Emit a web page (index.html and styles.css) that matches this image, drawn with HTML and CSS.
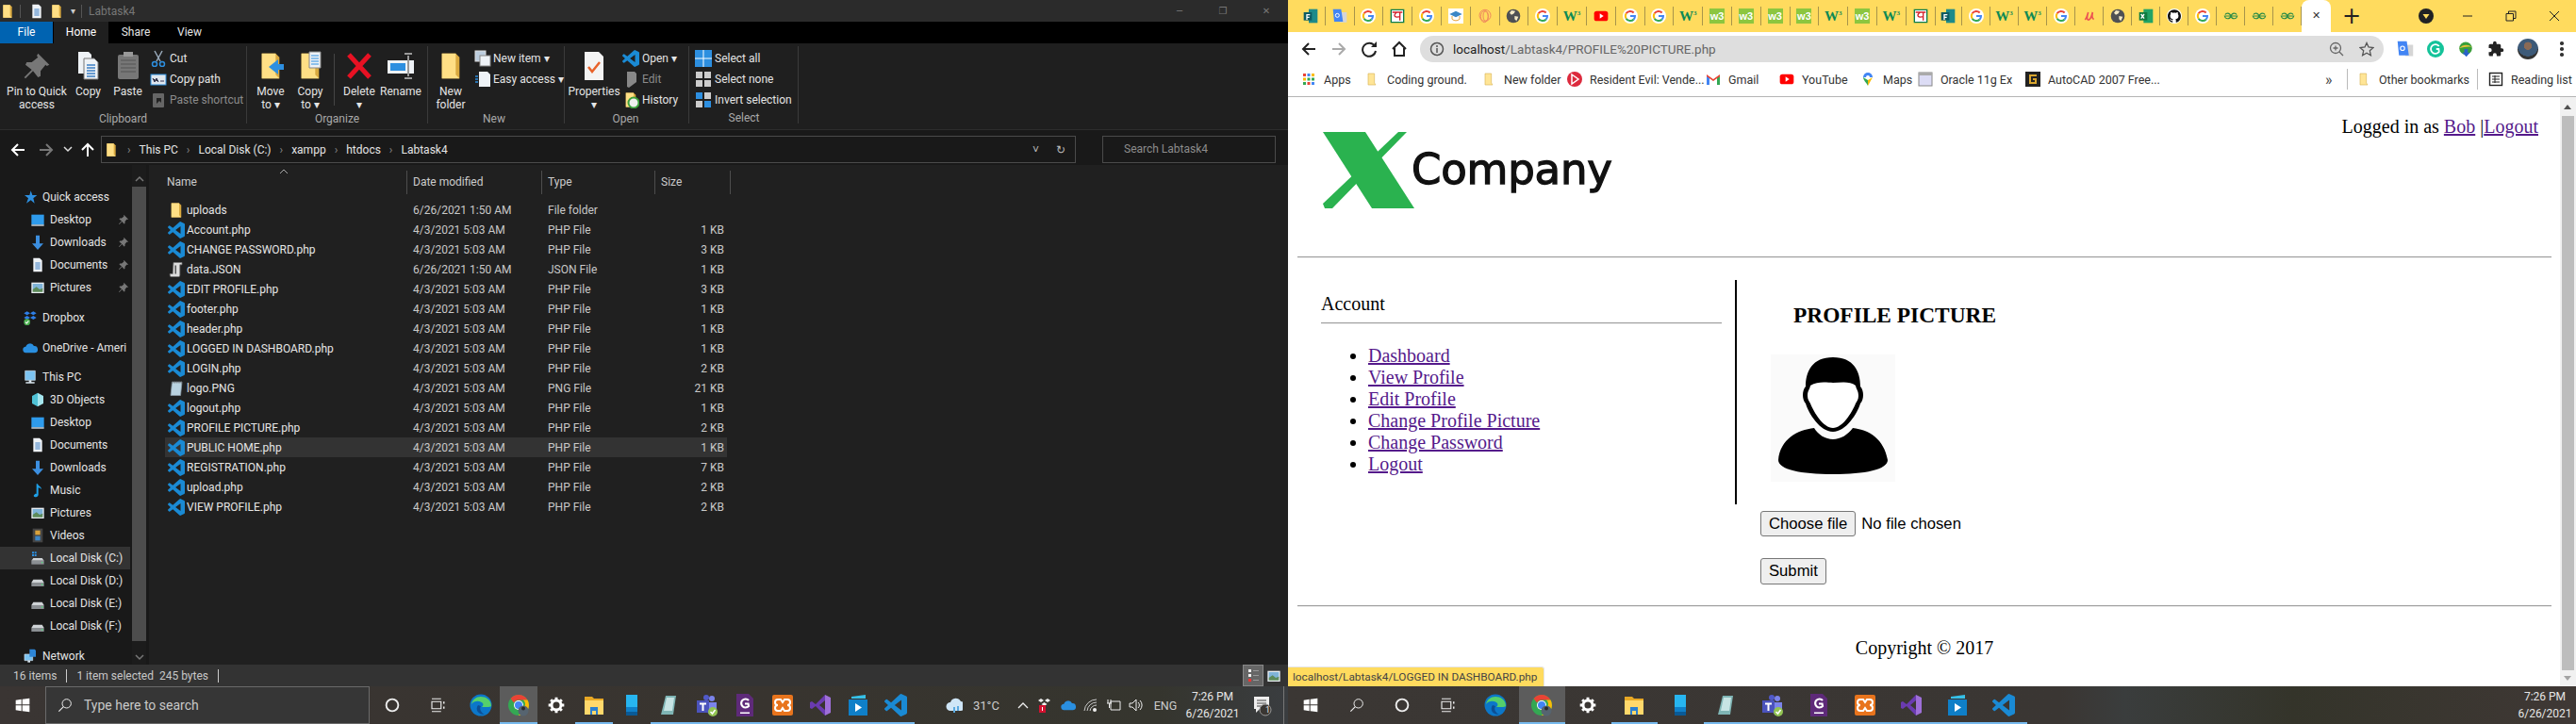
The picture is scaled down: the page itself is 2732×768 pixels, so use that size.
FILE: index.html
```html
<!DOCTYPE html>
<html lang="en">
<head>
  <meta charset="UTF-8">
  <title>Labtask4 - Profile Picture</title>
  <link rel="stylesheet" href="styles.css">
</head>
<body>
  <svg class="defs" xmlns="http://www.w3.org/2000/svg">
    <symbol id="folder" viewBox="0 0 24 24"><path fill="#d9a93f" d="M5 2h11l3 3v17H5z"/><path fill="#ffdf85" d="M5 2h11v17l3 3H5z"/></symbol>
    <symbol id="bfolder" viewBox="0 0 24 24"><path fill="#ffe596" stroke="#d9b659" d="M6 3h10v15l2 3H6z"/></symbol>
    <symbol id="vs" viewBox="0 0 24 24"><path fill="#1a8ad4" d="M23.15 2.587L18.21.21a1.494 1.494 0 0 0-1.705.29l-9.46 8.63-4.12-3.128a.999.999 0 0 0-1.276.057L.327 7.261A1 1 0 0 0 .326 8.74L3.899 12 .326 15.26a1 1 0 0 0 .001 1.479L1.65 17.94a.999.999 0 0 0 1.276.057l4.12-3.128 9.46 8.63a1.492 1.492 0 0 0 1.704.29l4.942-2.377A1.5 1.5 0 0 0 24 20.06V3.939a1.5 1.5 0 0 0-.85-1.352zm-5.146 14.861L10.826 12l7.178-5.448v10.896z"/></symbol>
    <symbol id="json" viewBox="0 0 24 24"><path fill="#ddd" stroke="#777" d="M8 2h12v3h-3v15a2 2 0 0 1-2 2H5a2 2 0 0 1-2-2v-2h4z"/><path stroke="#555" stroke-width="2" d="M11 6v12"/></symbol>
    <symbol id="note" viewBox="0 0 24 24"><path fill="#b9d2e0" stroke="#8a9aa5" d="M6 3h14l-2 19H4z"/><path stroke="#777" d="M7 2v3M10 2v3M13 2v3M16 2v3M19 2v3"/></symbol>
    <symbol id="pin" viewBox="0 0 24 24"><path fill="#777" d="M13 2l9 9-2 1-1-1-4 5 0 4-2 1-4-5-6 6-1-1 6-6-5-4 1-2h4l5-4-1-1z"/></symbol>
    <symbol id="star" viewBox="0 0 24 24"><path fill="#2d8fe0" d="M13 2l2.5 7H23l-6 5 2 8-6-5-7 5 3-8-6-5h8z"/></symbol>
    <symbol id="desk" viewBox="0 0 24 24"><path fill="#2e9bec" d="M2 4h20v16H2z"/><path fill="#dfe7ee" d="M2 20h20v2H2z"/></symbol>
    <symbol id="down" viewBox="0 0 24 24"><path fill="#3c8fe0" d="M9 1h6v13h6l-9 10-9-10h6z"/></symbol>
    <symbol id="doc" viewBox="0 0 24 24"><path fill="#eef2f6" d="M5 1h10l4 4v18H5z"/><path stroke="#3c7fc4" stroke-width="1.5" d="M8 9h8M8 12h8M8 15h8M8 18h8"/></symbol>
    <symbol id="pic" viewBox="0 0 24 24"><path fill="#e8edf2" d="M2 4h20v17H2z"/><path fill="#7fb3d8" d="M4 6h16v9H4z"/><path fill="#5c8a5a" d="M4 19v-4l6-4 5 4 5-2v6z"/></symbol>
    <symbol id="drop" viewBox="0 0 24 24"><path fill="#2e7fe8" d="M7 2l5 3-5 3-5-3zM17 2l5 3-5 3-5-3zM7 9l5 3-5 3-5-3zM17 9l5 3-5 3-5-3z"/><circle cx="7" cy="19" r="5" fill="#4caf50"/><path stroke="#fff" stroke-width="1.6" fill="none" d="M4.5 19l2 2 3-4"/></symbol>
    <symbol id="cloud" viewBox="0 0 24 24"><path fill="#2a8fe0" d="M6 20a5 5 0 0 1-1-10 7 7 0 0 1 13-1 5.500 5.500 0 0 1 1 11z"/></symbol>
    <symbol id="pc" viewBox="0 0 24 24"><path fill="#7cc4f2" stroke="#d7e3ec" d="M4 2h16v15H4z"/><path fill="#d7e3ec" d="M10 17h4v3h5v2H5v-2h5z"/></symbol>
    <symbol id="cube" viewBox="0 0 24 24"><path fill="#a5e6ee" d="M12 1l9 5v12l-9 5z"/><path fill="#4fc2d6" d="M12 1L3 6v12l9 5z"/></symbol>
    <symbol id="music" viewBox="0 0 24 24"><path fill="#1ea0e8" d="M10 2h2c1 4 6 4 6 9-1-2-3-3-5-3v11c0 3-3 4-5 4s-3-2-2-3c1-2 3-3 4-2z"/></symbol>
    <symbol id="video" viewBox="0 0 24 24"><path fill="#444" d="M4 1h16v22H4z"/><path fill="#d8a13b" d="M8 4h8v7H8z"/><path fill="#3d86c6" d="M8 13h8v7H8z"/></symbol>
    <symbol id="disk" viewBox="0 0 24 24"><path fill="#cfd3d6" d="M5 10h14l3 5H2z"/><path fill="#8b8f93" d="M2 15h20v6H2z"/><path fill="#4de07a" d="M18 17h2v2h-2z"/></symbol>
    <symbol id="sysdisk" viewBox="0 0 24 24"><path fill="#2d8fe0" d="M3 2h3v3H3zM7 2h3v3H7zM3 6h3v3H3zM7 6h3v3H7z"/><path fill="#cfd3d6" d="M5 12h14l3 4H2z"/><path fill="#8b8f93" d="M2 16h20v6H2z"/><path fill="#4de07a" d="M18 18h2v2h-2z"/></symbol>
    <symbol id="net" viewBox="0 0 24 24"><path fill="#7cc4f2" stroke="#d7e3ec" d="M3 9h13v10H3z"/><path fill="#2d86d8" d="M11 1h8l2 2v10h-10z"/><path fill="#d7e3ec" d="M8 19h4v3H8z"/></symbol>
    <symbol id="g" viewBox="0 0 24 24"><circle cx="12" cy="12" r="12" fill="#fff"/><g fill="none" stroke-width="3"><path stroke="#ea4335" d="M5.500 8A7.500 7.500 0 0 1 17.500 6.800"/><path stroke="#fbbc05" d="M5.500 8a7.500 7.500 0 0 0 0 8"/><path stroke="#34a853" d="M5.500 16a7.500 7.500 0 0 0 12 1.200"/><path stroke="#4285f4" d="M12 12h7.500a7.500 7.500 0 0 1-2 5.200"/></g></symbol>
    <symbol id="forms" viewBox="0 0 24 24"><path fill="#1d8a8a" d="M9 1h14v22H9z"/><path fill="#0d5c63" d="M1 6h13v13H1z"/><path fill="#fff" d="M5 9h6v2H7v2h3v2H7v3H5z"/></symbol>
    <symbol id="bangla" viewBox="0 0 24 24"><path fill="#fff" stroke="#0a7d4f" stroke-width="2" d="M2 2h20v20H2z"/><path fill="none" stroke="#d3202a" stroke-width="2" d="M4 6h16M16 6v13M11 6c-6 5-4 9 5 7"/></symbol>
    <symbol id="cap" viewBox="0 0 24 24"><path fill="#fff" d="M0 0h24v24H0z"/><path fill="#3b86c6" d="M12 4l10 5-10 5L2 9z"/><path fill="none" stroke="#e8a33b" stroke-width="1.500" d="M6 12v5c4 3 8 3 12 0v-5"/></symbol>
    <symbol id="swirl" viewBox="0 0 24 24"><g fill="none" stroke="#f08a5d" stroke-width="1.500"><circle cx="12" cy="11" r="9"/><ellipse cx="11" cy="13" rx="6" ry="9"/><ellipse cx="13" cy="12" rx="4" ry="8"/></g></symbol>
    <symbol id="globe" viewBox="0 0 24 24"><circle cx="12" cy="12" r="11" fill="#4e5054"/><path fill="#f3e9c6" d="M9 3l6 1-2 4-4 2-3-3zM14 12l6 1-3 7-3-3z"/></symbol>
    <symbol id="yt" viewBox="0 0 24 24"><rect x="1" y="4" width="22" height="16" rx="4" fill="#f00"/><path fill="#fff" d="M10 8l6 4-6 4z"/></symbol>
    <symbol id="gfg" viewBox="0 0 24 24"><g fill="none" stroke="#2f8d46" stroke-width="1.800"><path d="M12 12H2c1 5 8 6 10 0M12 12c-2-6-8-5-9-2"/><path d="M12 12h10c-1 5-8 6-10 0M12 12c2-6 8-5 9-2"/></g></symbol>
    <symbol id="u" viewBox="0 0 24 24"><path fill="none" stroke="#ec5252" stroke-width="2.500" d="M5 18c3-3 4-9 5-12-2 6-3 13 1 12 3-1 5-8 6-12-1 5-2 10 2 11"/></symbol>
    <symbol id="xl" viewBox="0 0 24 24"><path fill="#21a366" d="M8 1h15v22H8z"/><path fill="#107c41" d="M1 6h13v13H1z"/><path stroke="#fff" stroke-width="2" d="M4 9l5 7M9 9l-5 7"/></symbol>
    <symbol id="gh" viewBox="0 0 24 24"><circle cx="12" cy="12" r="12" fill="#fff"/><path transform="translate(1.500 1.500) scale(.875)" fill="#111" d="M12 .297c-6.630 0-12 5.373-12 12 0 5.303 3.438 9.800 8.205 11.385.600.113.820-.258.820-.577 0-.285-.010-1.040-.015-2.040-3.338.724-4.042-1.610-4.042-1.610C4.422 18.070 3.633 17.700 3.633 17.700c-1.087-.744.084-.729.084-.729 1.205.084 1.838 1.236 1.838 1.236 1.070 1.835 2.809 1.305 3.495.998.108-.776.417-1.305.760-1.605-2.665-.300-5.466-1.332-5.466-5.930 0-1.310.465-2.380 1.235-3.220-.135-.303-.540-1.523.105-3.176 0 0 1.005-.322 3.300 1.230.960-.267 1.980-.399 3-.405 1.020.006 2.040.138 3 .405 2.280-1.552 3.285-1.230 3.285-1.230.645 1.653.240 2.873.120 3.176.765.840 1.230 1.910 1.230 3.220 0 4.610-2.805 5.625-5.475 5.920.420.360.810 1.096.810 2.220 0 1.606-.015 2.896-.015 3.286 0 .315.210.690.825.570C20.565 22.092 24 17.592 24 12.297c0-6.627-5.373-12-12-12"/></symbol>
    <symbol id="translate" viewBox="0 0 24 24"><path fill="#d5d5d5" d="M10 6h13v16H12z"/><path fill="#4285f4" d="M1 1h13l3 20H3z"/><circle cx="8" cy="11" r="3" fill="none" stroke="#fff" stroke-width="1.500"/></symbol>
    <symbol id="gram" viewBox="0 0 24 24"><circle cx="12" cy="12" r="12" fill="#15c39a"/><path fill="none" stroke="#fff" stroke-width="2.400" d="M17 8a6.500 6.500 0 1 0 0 8l-.5-4H13"/></symbol>
    <symbol id="idm" viewBox="0 0 24 24"><circle cx="12" cy="11" r="9" fill="#3a9f3a"/><path fill="#e8c23a" d="M3 11c5-6 12-6 18-2-6-1-12 0-18 2z"/><path fill="#2a62c9" d="M10 12h5v5h3l-5 6-6-6h3z"/></symbol>
    <symbol id="puzzle" viewBox="0 0 24 24"><path fill="#222" d="M20.500 11H19V7a2 2 0 0 0-2-2h-4V3.500a2.500 2.500 0 0 0-5 0V5H4a2 2 0 0 0-2 2v3.800h1.500a2.700 2.700 0 0 1 0 5.400H2V20a2 2 0 0 0 2 2h3.800v-1.500a2.700 2.700 0 0 1 5.400 0V22H17a2 2 0 0 0 2-2v-4h1.500a2.500 2.500 0 0 0 0-5z"/></symbol>
    <symbol id="start" viewBox="0 0 24 24"><path fill="#fff" d="M1 4l9-1.300V11H1zM11.500 2.500L23 1v10H11.500zM1 12.500h9v8.800l-9-1.300zM11.500 12.500H23V23l-11.500-1.600z"/></symbol>
    <symbol id="lens" viewBox="0 0 24 24"><circle cx="14.500" cy="9.500" r="7" fill="none" stroke="#eee" stroke-width="1.500"/><path stroke="#eee" stroke-width="1.800" d="M9.500 14.500L2 22"/></symbol>
    <symbol id="cortana" viewBox="0 0 24 24"><circle cx="12" cy="12" r="8.500" fill="none" stroke="#eee" stroke-width="2.500"/></symbol>
    <symbol id="taskview" viewBox="0 0 24 24"><path fill="none" stroke="#eee" stroke-width="1.500" d="M4 7h13v10H4zM4 3h13M4 21h13"/><path fill="#eee" d="M20 7h2v3h-2zM20 14h2v3h-2z"/></symbol>
    <symbol id="edge" viewBox="0 0 24 24"><circle cx="12" cy="12" r="11.500" fill="#0c77c9"/><path fill="#55d06b" d="M23 13C23 6 17 3 12 3 7 3 3 6 2 11c3-4 9-4 12-1 1 2 0 3-1 4h7c2 0 3-1 3-1z"/><path fill="#0d4f94" d="M9 12c-3 4-1 10 7 10-4-2-6-6-4-9z"/></symbol>
    <symbol id="chrome" viewBox="0 0 24 24"><circle cx="12" cy="12" r="11" fill="#34a853"/><path fill="#ea4335" d="M12 1a11 11 0 0 1 9.500 5.500H12a5.500 5.500 0 0 0-5 3L3.500 5A11 11 0 0 1 12 1z"/><path fill="#fbbc05" d="M21.500 6.500A11 11 0 0 1 12 23l5-8a5.500 5.500 0 0 0 0-8.500z"/><circle cx="12" cy="12" r="5" fill="#fff"/><circle cx="12" cy="12" r="4" fill="#4285f4"/><circle cx="17" cy="18" r="5.500" fill="#566470"/><circle cx="17" cy="15.500" r="2" fill="#2b2b2b"/></symbol>
    <symbol id="gear" viewBox="0 0 24 24"><circle cx="12" cy="12" r="6" fill="none" stroke="#fff" stroke-width="3.500"/><path stroke="#fff" stroke-width="3.500" d="M12 2v4M12 18v4M2 12h4M18 12h4M5 5l2.800 2.800M16.200 16.200L19 19M5 19l2.800-2.800M16.200 7.800L19 5"/></symbol>
    <symbol id="explorer" viewBox="0 0 24 24"><path fill="#e8a825" d="M2 3h8l2 2h10v4H2z"/><path fill="#ffd86b" d="M2 7h20v15H2z"/><path fill="#2a7fd0" d="M8 14h8v8h-2v-4h-4v4H8z"/></symbol>
    <symbol id="phone" viewBox="0 0 24 24"><path fill="#27b5f0" d="M6 1h12v13H6z"/><path fill="#0f7fc8" d="M6 14h12v5H6z"/><path fill="#0a5a96" d="M6 19h12v4H6z"/></symbol>
    <symbol id="pad" viewBox="0 0 24 24"><path fill="#7fb5b5" d="M8 2h11l-3 20H3z"/><path fill="#c7e4e4" d="M9 4h8l-2 14H6z"/></symbol>
    <symbol id="teams" viewBox="0 0 24 24"><circle cx="17" cy="5" r="3" fill="#7b83eb"/><circle cx="11" cy="4" r="3" fill="#5059c9"/><path fill="#7b83eb" d="M9 9h13v8a5 5 0 0 1-10 1H9z"/><path fill="#4b53bc" d="M1 7h13v13H1z"/><path fill="#fff" d="M4 9.500h7v2H8.500V18h-2v-6.500H4z"/><circle cx="18" cy="19" r="5" fill="#92c353"/><path fill="none" stroke="#fff" stroke-width="1.500" d="M15.500 19l2 2 3-4"/></symbol>
    <symbol id="gpdf" viewBox="0 0 24 24"><path fill="#5e2a79" d="M3 0h13l5 5v19H3z"/><path fill="none" stroke="#fff" stroke-width="2.200" d="M16 7a4.500 4.500 0 1 0 0 6l-.5-2.500H12"/><path fill="#fff" d="M7 19.500h10V21H7z"/></symbol>
    <symbol id="xampp" viewBox="0 0 24 24"><rect x="1" y="1" width="22" height="22" rx="2" fill="#e8741d"/><path fill="none" stroke="#fff" stroke-width="2" d="M7 6h3l2 3 2-3h3a2 2 0 0 1 0 6 2 2 0 0 1 0 6h-3l-2-3-2 3H7a2 2 0 0 1 0-6 2 2 0 0 1 0-6z"/></symbol>
    <symbol id="vstudio" viewBox="0 0 24 24"><path fill="#9e6fd8" d="M17 1l6 3v16l-6 3z"/><path fill="#6a3bb0" d="M17 1L7 11 3 8 1 9v6l2 1 4-3 10 10v-6l-6-5 6-5z"/></symbol>
    <symbol id="player" viewBox="0 0 24 24"><path fill="#35c0e8" d="M5 3l15-2v4H5z"/><path fill="#0f7fc8" d="M2 6h20v17H2z"/><path fill="#fff" d="M9 10l7 4.500L9 19z"/></symbol>
  </svg>

  <div class="windows">
    <section class="explorer">
      <div class="ex-title">
        <svg class="i16"><use href="#folder"/></svg><i class="ex-sep"></i>
        <svg class="i16"><use href="#doc"/></svg>
        <svg class="i16 ex-f2"><use href="#folder"/></svg>
        <span class="ex-drop">▾</span><i class="ex-sep sep2"></i>
        <span class="ex-name">Labtask4</span>
        <span class="ex-controls"><b>─</b><b>❐</b><b>✕</b></span>
      </div>
      <div class="ex-tabs">
        <span class="ex-tab file">File</span>
        <span class="ex-tab home">Home</span>
        <span class="ex-tab share">Share</span>
        <span class="ex-tab view">View</span>
      </div>
      <div class="ribbon">
        <div class="group g-clip">
          <div class="group-items">
            <div class="big w70 dim-ic"><svg class="i32"><use href="#pin"/></svg><span>Pin to Quick<br>access</span></div>
            <div class="big w39"><svg class="i32"><path fill="#eef2f6" d="M5 1h11l3 3v20H5z"/><path fill="#eef2f6" stroke="#777" d="M11 8h11l4 4v18H11z"/><path stroke="#3c7fc4" stroke-width="1.500" d="M14 15h9M14 18h9M14 21h9M14 24h9M14 27h9"/></svg><span>Copy</span></div>
            <div class="big w45"><svg class="i32"><rect x="5" y="4" width="22" height="26" rx="2" fill="#777"/><path stroke="#555" d="M8 10h16M8 14h16M8 18h16M8 22h16"/><rect x="11" y="1" width="10" height="5" fill="#999"/></svg><span>Paste</span></div>
            <div class="small-col">
              <div class="small"><svg class="i18"><path fill="none" stroke="#9ab" stroke-width="1.500" d="M5 1l6 11M13 1L7 12"/><circle cx="5" cy="15" r="2.500" fill="none" stroke="#2d8fe0" stroke-width="1.500"/><circle cx="13" cy="15" r="2.500" fill="none" stroke="#2d8fe0" stroke-width="1.500"/></svg><span>Cut</span></div>
              <div class="small"><svg class="i18"><rect x="1" y="4" width="16" height="11" fill="#dfe7ee" stroke="#2d8fe0"/><path stroke="#335" d="M3 8l2 4 2-4 2 4M11 11h4"/></svg><span>Copy path</span></div>
              <div class="small muted"><svg class="i18"><rect x="3" y="2" width="12" height="15" rx="1" fill="#666"/><path fill="#222" d="M7 7h5v5l-2-2-3 3z"/></svg><span>Paste shortcut</span></div>
            </div>
          </div>
          <div class="group-label">Clipboard</div>
        </div>
        <div class="group g-org">
          <div class="group-items">
            <div class="big w42"><svg class="i32"><use href="#folder"/><path fill="#2d8fe0" d="M14 17l10-8v5h6v6h-6v5z"/></svg><span>Move<br>to ▾</span></div>
            <div class="big w42"><svg class="i32"><use href="#folder"/><path fill="#eef2f6" stroke="#888" d="M15 1h12v17H15z"/><path stroke="#2d8fe0" d="M17 5h8M17 8h8M17 11h8M17 14h8"/></svg><span>Copy<br>to ▾</span></div>
            <i class="rib-sep"></i>
            <div class="big w44"><svg class="i32"><path stroke="#e81123" stroke-width="5" d="M5 4l22 24M27 4L5 28"/></svg><span>Delete<br>▾</span></div>
            <div class="big w44"><svg class="i32"><rect x="2" y="10" width="28" height="14" fill="#eef2f6"/><rect x="5" y="13" width="16" height="8" fill="#2d8fe0"/><path stroke="#999" stroke-width="2" d="M24 5v22M20 3h8M20 29h8"/></svg><span>Rename</span></div>
          </div>
          <div class="group-label">Organize</div>
        </div>
        <div class="group g-new">
          <div class="group-items">
            <div class="big w48"><svg class="i32"><use href="#folder"/></svg><span>New<br>folder</span></div>
            <div class="small-col">
              <div class="small tight"><svg class="i18"><rect x="1" y="1" width="11" height="11" fill="#bcd" stroke="#ddd"/><rect x="6" y="6" width="11" height="11" fill="#eef2f6" stroke="#888"/></svg><span>New item ▾</span></div>
              <div class="small tight"><svg class="i18"><path fill="#eef2f6" d="M5 1h9l3 3v13H5z"/><path stroke="#2d8fe0" stroke-width="1.500" d="M1 6h3M1 9h3M1 12h3"/></svg><span>Easy access ▾</span></div>
            </div>
          </div>
          <div class="group-label">New</div>
        </div>
        <div class="group g-open">
          <div class="group-items">
            <div class="big w58"><svg class="i32"><path fill="#f3f3f3" d="M6 1h15l5 5v25H6z"/><path fill="none" stroke="#e8622a" stroke-width="2.500" d="M10 17l4 5 8-10"/></svg><span>Properties<br>▾</span></div>
            <div class="small-col">
              <div class="small"><svg class="i18"><use href="#vs"/></svg><span>Open ▾</span></div>
              <div class="small muted"><svg class="i18"><path fill="#888" d="M5 1h8l2 2v9L7 18l-2-1z"/></svg><span>Edit</span></div>
              <div class="small"><svg class="i18"><use href="#folder"/><circle cx="12" cy="12" r="5.500" fill="#eee" stroke="#3a9f3a" stroke-width="2"/></svg><span>History</span></div>
            </div>
          </div>
          <div class="group-label">Open</div>
        </div>
        <div class="group g-sel">
          <div class="group-items">
            <div class="small-col">
              <div class="small"><svg class="i18"><path fill="#2d8fe0" d="M0 0h18v18H0z"/><path stroke="#fff" d="M9 0v18M0 9h18"/></svg><span>Select all</span></div>
              <div class="small"><svg class="i18"><path fill="#ccc" d="M1 1h7v7H1zM10 1h7v7h-7zM1 10h7v7H1zM10 10h7v7h-7z"/></svg><span>Select none</span></div>
              <div class="small"><svg class="i18"><path fill="#2d8fe0" d="M1 1h7v7H1zM10 10h7v7h-7z"/><path fill="#ccc" d="M10 1h7v7h-7zM1 10h7v7H1z"/></svg><span>Invert selection</span></div>
            </div>
          </div>
          <div class="group-label">Select</div>
        </div>
      </div>
      <div class="ex-address">
        <div class="ex-nav-btns">
          <svg class="i16"><path fill="none" stroke="#fff" stroke-width="2" d="M15 8H2M8 2L2 8l6 6"/></svg>
          <svg class="i16"><path fill="none" stroke="#777" stroke-width="2" d="M1 8h13M8 2l6 6-6 6"/></svg>
          <svg class="nav-chev"><path fill="none" stroke="#ddd" stroke-width="1.500" d="M1 1l4 4 4-4"/></svg>
          <svg class="i16"><path fill="none" stroke="#fff" stroke-width="2" d="M8 15V2M2 8l6-6 6 6"/></svg>
        </div>
        <div class="addr-box">
          <svg class="i16"><use href="#folder"/></svg>
          <span class="crumb-sep">›</span><span>This PC</span>
          <span class="crumb-sep">›</span><span>Local Disk (C:)</span>
          <span class="crumb-sep">›</span><span>xampp</span>
          <span class="crumb-sep">›</span><span>htdocs</span>
          <span class="crumb-sep">›</span><span>Labtask4</span>
          <span class="addr-end"><span>˅</span><span>↻</span></span>
        </div>
        <div class="search-box"><span>Search Labtask4</span></div>
      </div>
      <div class="ex-body">
        <div class="nav-pane">
          <div class="nav-list">
            <div class="nav-item root"><svg class="i16"><use href="#star"/></svg><span>Quick access</span></div>
            <div class="nav-item"><svg class="i16"><use href="#desk"/></svg><span>Desktop</span><svg class="i12 pinned"><use href="#pin"/></svg></div>
            <div class="nav-item"><svg class="i16"><use href="#down"/></svg><span>Downloads</span><svg class="i12 pinned"><use href="#pin"/></svg></div>
            <div class="nav-item"><svg class="i16"><use href="#doc"/></svg><span>Documents</span><svg class="i12 pinned"><use href="#pin"/></svg></div>
            <div class="nav-item"><svg class="i16"><use href="#pic"/></svg><span>Pictures</span><svg class="i12 pinned"><use href="#pin"/></svg></div>
            <div class="nav-item root gap"><svg class="i16"><use href="#drop"/></svg><span>Dropbox</span></div>
            <div class="nav-item root gap"><svg class="i16"><use href="#cloud"/></svg><span>OneDrive - Ameri</span></div>
            <div class="nav-item root gap7"><svg class="i16"><use href="#pc"/></svg><span>This PC</span></div>
            <div class="nav-item"><svg class="i16"><use href="#cube"/></svg><span>3D Objects</span></div>
            <div class="nav-item"><svg class="i16"><use href="#desk"/></svg><span>Desktop</span></div>
            <div class="nav-item"><svg class="i16"><use href="#doc"/></svg><span>Documents</span></div>
            <div class="nav-item"><svg class="i16"><use href="#down"/></svg><span>Downloads</span></div>
            <div class="nav-item"><svg class="i16"><use href="#music"/></svg><span>Music</span></div>
            <div class="nav-item"><svg class="i16"><use href="#pic"/></svg><span>Pictures</span></div>
            <div class="nav-item"><svg class="i16"><use href="#video"/></svg><span>Videos</span></div>
            <div class="nav-item selected"><svg class="i16"><use href="#sysdisk"/></svg><span>Local Disk (C:)</span></div>
            <div class="nav-item"><svg class="i16"><use href="#disk"/></svg><span>Local Disk (D:)</span></div>
            <div class="nav-item"><svg class="i16"><use href="#disk"/></svg><span>Local Disk (E:)</span></div>
            <div class="nav-item"><svg class="i16"><use href="#disk"/></svg><span>Local Disk (F:)</span></div>
            <div class="nav-item root gap"><svg class="i16"><use href="#net"/></svg><span>Network</span></div>
          </div>
          <div class="nav-scroll"><svg class="nav-arrow"><path fill="none" stroke="#777" stroke-width="1.500" d="M2 6l4-4 4 4"/></svg><i class="nav-thumb"></i><svg class="nav-arrow"><path fill="none" stroke="#777" stroke-width="1.500" d="M2 2l4 4 4-4"/></svg></div>
        </div>
        <div class="file-pane">
          <div class="file-head">
            <svg class="sort-caret"><path fill="none" stroke="#aaa" d="M1 5l4-4 4 4"/></svg>
            <span>Name</span><span>Date modified</span><span>Type</span><span>Size</span>
          </div>
          <div class="file-row"><span class="fname"><svg class="i18"><use href="#folder"/></svg>uploads</span><span>6/26/2021 1:50 AM</span><span>File folder</span><span></span></div>
          <div class="file-row"><span class="fname"><svg class="i18"><use href="#vs"/></svg>Account.php</span><span>4/3/2021 5:03 AM</span><span>PHP File</span><span class="fsize">1 KB</span></div>
          <div class="file-row"><span class="fname"><svg class="i18"><use href="#vs"/></svg>CHANGE PASSWORD.php</span><span>4/3/2021 5:03 AM</span><span>PHP File</span><span class="fsize">3 KB</span></div>
          <div class="file-row"><span class="fname"><svg class="i18"><use href="#json"/></svg>data.JSON</span><span>6/26/2021 1:50 AM</span><span>JSON File</span><span class="fsize">1 KB</span></div>
          <div class="file-row"><span class="fname"><svg class="i18"><use href="#vs"/></svg>EDIT PROFILE.php</span><span>4/3/2021 5:03 AM</span><span>PHP File</span><span class="fsize">3 KB</span></div>
          <div class="file-row"><span class="fname"><svg class="i18"><use href="#vs"/></svg>footer.php</span><span>4/3/2021 5:03 AM</span><span>PHP File</span><span class="fsize">1 KB</span></div>
          <div class="file-row"><span class="fname"><svg class="i18"><use href="#vs"/></svg>header.php</span><span>4/3/2021 5:03 AM</span><span>PHP File</span><span class="fsize">1 KB</span></div>
          <div class="file-row"><span class="fname"><svg class="i18"><use href="#vs"/></svg>LOGGED IN DASHBOARD.php</span><span>4/3/2021 5:03 AM</span><span>PHP File</span><span class="fsize">1 KB</span></div>
          <div class="file-row"><span class="fname"><svg class="i18"><use href="#vs"/></svg>LOGIN.php</span><span>4/3/2021 5:03 AM</span><span>PHP File</span><span class="fsize">2 KB</span></div>
          <div class="file-row"><span class="fname"><svg class="i18"><use href="#note"/></svg>logo.PNG</span><span>4/3/2021 5:03 AM</span><span>PNG File</span><span class="fsize">21 KB</span></div>
          <div class="file-row"><span class="fname"><svg class="i18"><use href="#vs"/></svg>logout.php</span><span>4/3/2021 5:03 AM</span><span>PHP File</span><span class="fsize">1 KB</span></div>
          <div class="file-row"><span class="fname"><svg class="i18"><use href="#vs"/></svg>PROFILE PICTURE.php</span><span>4/3/2021 5:03 AM</span><span>PHP File</span><span class="fsize">2 KB</span></div>
          <div class="file-row active"><span class="fname"><svg class="i18"><use href="#vs"/></svg>PUBLIC HOME.php</span><span>4/3/2021 5:03 AM</span><span>PHP File</span><span class="fsize">1 KB</span></div>
          <div class="file-row"><span class="fname"><svg class="i18"><use href="#vs"/></svg>REGISTRATION.php</span><span>4/3/2021 5:03 AM</span><span>PHP File</span><span class="fsize">7 KB</span></div>
          <div class="file-row"><span class="fname"><svg class="i18"><use href="#vs"/></svg>upload.php</span><span>4/3/2021 5:03 AM</span><span>PHP File</span><span class="fsize">2 KB</span></div>
          <div class="file-row"><span class="fname"><svg class="i18"><use href="#vs"/></svg>VIEW PROFILE.php</span><span>4/3/2021 5:03 AM</span><span>PHP File</span><span class="fsize">2 KB</span></div>
        </div>
      </div>
      <div class="ex-status">
        <span class="st-item">16 items</span>
        <span class="st-item">1 item selected&nbsp; 245 bytes</span>
        <span class="st-views">
          <span class="st-view on"><svg class="i16"><path fill="#eee" d="M3 1h3v3H3zM3 6h3v3H3z"/><path fill="#e33" d="M3 11h3v3H3z"/><path stroke="#999" d="M8 2.500h6M8 7.500h6M8 12.500h6"/></svg></span>
          <span class="st-view"><svg class="i16"><use href="#pic"/></svg></span>
        </span>
      </div>
    </section>

    <section class="chrome">
      <div class="tabstrip">
        <div class="favs">
          <span class="fav"><svg class="i16"><use href="#forms"/></svg></span>
          <span class="fav"><svg class="i16"><use href="#translate"/></svg></span>
          <span class="fav"><svg class="i16"><use href="#g"/></svg></span>
          <span class="fav"><svg class="i16"><use href="#bangla"/></svg></span>
          <span class="fav"><svg class="i16"><use href="#g"/></svg></span>
          <span class="fav"><svg class="i16"><use href="#cap"/></svg></span>
          <span class="fav"><svg class="i16"><use href="#swirl"/></svg></span>
          <span class="fav"><svg class="i16"><use href="#globe"/></svg></span>
          <span class="fav"><svg class="i16"><use href="#g"/></svg></span>
          <span class="fav"><b class="w3">W<sup>3</sup></b></span>
          <span class="fav"><svg class="i16"><use href="#yt"/></svg></span>
          <span class="fav"><svg class="i16"><use href="#g"/></svg></span>
          <span class="fav"><svg class="i16"><use href="#g"/></svg></span>
          <span class="fav"><b class="w3">W<sup>3</sup></b></span>
          <span class="fav"><b class="w3box">w3</b></span>
          <span class="fav"><b class="w3box">w3</b></span>
          <span class="fav"><b class="w3box">w3</b></span>
          <span class="fav"><b class="w3box">w3</b></span>
          <span class="fav"><b class="w3">W<sup>3</sup></b></span>
          <span class="fav"><b class="w3box">w3</b></span>
          <span class="fav"><b class="w3">W<sup>3</sup></b></span>
          <span class="fav"><svg class="i16"><use href="#bangla"/></svg></span>
        </div>
        <div class="favs second">
          <span class="fav"><svg class="i16"><use href="#forms"/></svg></span>
          <span class="fav"><svg class="i16"><use href="#g"/></svg></span>
          <span class="fav"><b class="w3">W<sup>3</sup></b></span>
          <span class="fav"><b class="w3">W<sup>3</sup></b></span>
          <span class="fav"><svg class="i16"><use href="#g"/></svg></span>
          <span class="fav"><svg class="i16"><use href="#u"/></svg></span>
          <span class="fav"><svg class="i16"><use href="#globe"/></svg></span>
          <span class="fav"><svg class="i16"><use href="#xl"/></svg></span>
          <span class="fav"><svg class="i16"><use href="#gh"/></svg></span>
          <span class="fav"><svg class="i16"><use href="#g"/></svg></span>
          <span class="fav"><svg class="i16"><use href="#gfg"/></svg></span>
          <span class="fav"><svg class="i16"><use href="#gfg"/></svg></span>
          <span class="fav"><svg class="i16"><use href="#gfg"/></svg></span>
        </div>
        <span class="tab-active">✕</span>
        <span class="tab-new">+</span>
        <span class="tab-search"><svg class="i16"><circle cx="8" cy="8" r="8" fill="#202124"/><path fill="#ffdb5e" d="M4.500 6h7L8 11z"/></svg></span>
        <span class="win-btns">
          <span><svg class="i12"><path stroke="#222" d="M1 6h10"/></svg></span>
          <span><svg class="i12"><path fill="none" stroke="#222" d="M1 3.500h7.500V11H1zM3.500 3.500V1H11v7.500H8.500"/></svg></span>
          <span><svg class="i12"><path stroke="#222" d="M1 1l10 10M11 1L1 11"/></svg></span>
        </span>
      </div>
      <div class="toolbar">
        <div class="tool-btns">
          <svg class="i18"><path fill="none" stroke="#222" stroke-width="2" d="M16 9H3M9 3L3 9l6 6"/></svg>
          <svg class="i18"><path fill="none" stroke="#aaa" stroke-width="2" d="M2 9h13M9 3l6 6-6 6"/></svg>
          <svg class="i18"><path fill="none" stroke="#222" stroke-width="2" d="M15 6a7 7 0 1 0 1 5"/><path fill="#222" d="M11 7h6V1z"/></svg>
          <svg class="i18"><path fill="none" stroke="#222" stroke-width="2" d="M2 9l7-7 7 7M4 8v8h10V8"/></svg>
        </div>
        <div class="omnibox">
          <svg class="i16"><circle cx="8" cy="8" r="6.500" fill="none" stroke="#555" stroke-width="1.500"/><path stroke="#555" stroke-width="1.500" d="M8 7v5M8 4v2"/></svg>
          <span class="url"><b>localhost</b>/Labtask4/PROFILE%20PICTURE.php</span>
          <svg class="i16 omni-zoom"><circle cx="7" cy="7" r="5.500" fill="none" stroke="#666" stroke-width="1.300"/><path stroke="#666" stroke-width="1.300" d="M11 11l4 4M7 4.500v5M4.500 7h5"/></svg>
          <svg class="i16 omni-star"><path fill="none" stroke="#555" stroke-width="1.300" d="M8 1.500l2 4.500 5 .5-3.700 3.300 1.100 4.900L8 12.300l-4.400 2.400 1.100-4.900L1 6.500l5-.5z"/></svg>
        </div>
        <div class="ext-btns">
          <svg class="i18"><use href="#translate"/></svg>
          <svg class="i18"><use href="#gram"/></svg>
          <svg class="i18"><use href="#idm"/></svg>
          <svg class="i18"><use href="#puzzle"/></svg>
          <span class="avatar"></span>
          <span class="kebab"><i></i><i></i><i></i></span>
        </div>
      </div>
      <div class="bookmarks">
        <span class="bm bm-apps"><svg class="i12"><path fill="#ea4335" d="M0 0h3v3H0z"/><path fill="#4285f4" d="M4.500 0h3v3h-3zM9 9h3v3H9z"/><path fill="#fbbc05" d="M9 0h3v3H9zM0 4.500h3v3H0z"/><path fill="#34a853" d="M4.500 4.500h3v3h-3zM9 4.500h3v3H9zM0 9h3v3H0z"/><path fill="#ea4335" d="M4.500 9h3v3h-3z"/></svg>Apps</span>
        <span class="bm bm-coding"><svg class="i16"><use href="#bfolder"/></svg>Coding ground.</span>
        <span class="bm bm-newf"><svg class="i16"><use href="#bfolder"/></svg>New folder</span>
        <span class="bm bm-re"><svg class="i16"><circle cx="8" cy="8" r="8" fill="#dc2a3d"/><path fill="none" stroke="#fff" stroke-width="1.500" d="M5 3l7 5-7 5z"/></svg>Resident Evil: Vende...</span>
        <span class="bm bm-gmail"><svg class="i16"><path fill="#4285f4" d="M1 4l3 2v8H1z"/><path fill="#34a853" d="M12 6l3-2v10h-3z"/><path fill="#ea4335" d="M1 3l7 5 7-5v2L8 10 1 5z"/></svg>Gmail</span>
        <span class="bm bm-yt"><svg class="i16"><use href="#yt"/></svg>YouTube</span>
        <span class="bm bm-maps"><svg class="i16"><path fill="#34a853" d="M8 15C6 11 3 9 3 6l5 3z"/><path fill="#fbbc05" d="M8 15l5-9-5 3z"/><path fill="#4285f4" d="M3 6a5 5 0 0 1 10 0z"/><circle cx="8" cy="6" r="2" fill="#fff"/></svg>Maps</span>
        <span class="bm bm-ora"><svg class="i16"><rect x="1" y="1" width="14" height="14" fill="#dcdcf5" stroke="#888"/><path fill="#aaa" d="M1 1h14v3H1z"/></svg>Oracle 11g Ex</span>
        <span class="bm bm-acad"><svg class="i16"><rect width="16" height="16" fill="#222"/><path fill="none" stroke="#d9a62e" stroke-width="2" d="M12 4H5v8h6V8H8"/></svg>AutoCAD 2007 Free...</span>
        <span class="bm-more">»</span><i class="bm-sep"></i>
        <span class="bm bm-other"><svg class="i16"><use href="#bfolder"/></svg>Other bookmarks</span><i class="bm-sep"></i>
        <span class="bm bm-read"><svg class="i16"><rect x="1.500" y="1.500" width="13" height="13" fill="none" stroke="#222" stroke-width="1.400"/><path stroke="#222" d="M4 5h8M4 8h8M4 11h8M7 4v8"/></svg>Reading list</span>
      </div>
      <div class="page">
        <div class="content">
          <header class="site-head">
            <div class="logo">
              <svg class="logo-x" viewBox="0 0 100 85"><path fill="#2ab24f" d="M0 2h45l52 81H52z"/><path fill="#2ab24f" d="M80 2h9L10 83H2L0 78z"/></svg>
              <span class="logo-text">Company</span>
            </div>
            <div class="logged">Logged in as <a href="#">Bob</a> |<a href="#">Logout</a></div>
          </header>
          <hr class="rule">
          <div class="main">
            <aside class="side">
              <div class="side-title">Account</div>
              <hr class="rule">
              <ul class="side-menu">
                <li><a href="#">Dashboard</a></li>
                <li><a href="#">View Profile</a></li>
                <li><a href="#">Edit Profile</a></li>
                <li><a href="#">Change Profile Picture</a></li>
                <li><a href="#">Change Password</a></li>
                <li><a href="#">Logout</a></li>
              </ul>
            </aside>
            <div class="profile">
              <h3>PROFILE PICTURE</h3>
              <svg class="avatar-pic" viewBox="0 0 132 135">
                <rect width="132" height="135" fill="#fafafa"/>
                <g class="sil">
                  <path d="M66 3C44 3 37 18 37 34c-4 4-4 14 0 18 3 10 15 30 29 30s26-20 29-30c4-4 4-14 0-18C95 18 88 3 66 3z"/>
                  <path fill="#fff" d="M42 33c8-5 18-3 24-3 8 0 18-2 24 3 1 5 3 5 3 11 0 4-2 6-3 8-4 10-14 26-24 26S46 62 42 52c-1-2-3-4-3-8 0-6 2-6 3-11z"/>
                  <path d="M46 78c4 7 12 12 20 12s16-5 21-12c18 2 33 12 37 34 0 10-24 15-58 15S8 122 8 112c2-22 20-32 38-34z"/>
                </g>
              </svg>
            </div>
          </div>
          <form class="upload">
            <div class="file-line"><button type="button">Choose file</button><span>No file chosen</span></div>
            <button type="button" class="submit">Submit</button>
          </form>
          <hr class="rule">
          <footer class="copyright">Copyright © 2017</footer>
        </div>
        <div class="page-scroll"><span class="ps-up"></span><i class="ps-thumb"></i><span class="ps-dn"></span></div>
        <div class="status-bubble">localhost/Labtask4/LOGGED IN DASHBOARD.php</div>
      </div>
    </section>
  </div>

  <div class="taskbars">
    <div class="taskbar tb-left">
      <span class="tb-btn"><svg class="i16"><use href="#start"/></svg></span>
      <div class="tb-search"><svg class="i16"><use href="#lens"/></svg><span>Type here to search</span></div>
      <span class="tb-btn"><svg class="i18"><use href="#cortana"/></svg></span>
      <span class="tb-btn"><svg class="i18"><use href="#taskview"/></svg></span>
      <span class="tb-app"><svg class="i24"><use href="#edge"/></svg></span>
      <span class="tb-app run cur"><svg class="i24"><use href="#chrome"/></svg></span>
      <span class="tb-app"><svg class="i20"><use href="#gear"/></svg></span>
      <span class="tb-app run"><svg class="i24"><use href="#explorer"/></svg></span>
      <span class="tb-app"><svg class="i24"><use href="#phone"/></svg></span>
      <span class="tb-app run"><svg class="i24"><use href="#pad"/></svg></span>
      <span class="tb-app run"><svg class="i24"><use href="#teams"/></svg></span>
      <span class="tb-app run"><svg class="i24"><use href="#gpdf"/></svg></span>
      <span class="tb-app run"><svg class="i24"><use href="#xampp"/></svg></span>
      <span class="tb-app run"><svg class="i24"><use href="#vstudio"/></svg></span>
      <span class="tb-app run"><svg class="i24"><use href="#player"/></svg></span>
      <span class="tb-app run"><svg class="i24"><use href="#vs"/></svg></span>
      <div class="tray">
        <span class="tr-weather"><svg class="i18"><path fill="#cfe6f7" d="M5 15a4.500 4.500 0 0 1 0-9 6 6 0 0 1 11-1 5 5 0 0 1 0 10z"/><path fill="#5aa9e0" d="M8 11h2v6H8zM12 10h2v5h-2z"/></svg></span>
        <span class="tr-temp">31°C</span>
        <span class="tr-ic"><svg class="i12"><path fill="none" stroke="#eee" stroke-width="1.300" d="M1 9l5-5 5 5"/></svg></span>
        <span class="tr-ic"><svg class="i16"><path fill="#eee" d="M3 1l3 2-3 2-3-2zM10 1l3 2-3 2-3-2zM6.500 5l3 2-3 2-3-2z"/><rect x="1" y="8" width="7" height="8" fill="#d3102f"/><path stroke="#fff" d="M4.500 10v4"/></svg></span>
        <span class="tr-ic"><svg class="i16"><use href="#cloud"/></svg></span>
        <span class="tr-ic"><svg class="i16"><path fill="none" stroke="#ccc" d="M1 14a13 13 0 0 1 13-12M4 14a10 10 0 0 1 10-9M7 14a7 7 0 0 1 7-6"/><circle cx="12" cy="13" r="2" fill="#eee"/></svg></span>
        <span class="tr-ic"><svg class="i16"><path fill="none" stroke="#eee" d="M5 4h10v9H5z"/><path stroke="#eee" d="M2 2v4M5 2v4M1 6h5M3.500 6v5"/></svg></span>
        <span class="tr-ic"><svg class="i16"><path fill="none" stroke="#eee" d="M1 6h3l4-4v12l-4-4H1zM10 5a4 4 0 0 1 0 6M12 3a7 7 0 0 1 0 10"/></svg></span>
        <span class="tr-lang">ENG</span>
        <span class="tr-clock">7:26 PM<br>6/26/2021</span>
        <span class="tr-notif"><svg class="i24"><path fill="#eee" d="M3 3h16v13H9l-4 4v-4H3z"/><path stroke="#444" d="M6 7h10M6 10h10M6 13h6"/><circle cx="15" cy="17" r="6" fill="#3a3632" stroke="#999"/></svg><b>1</b></span>
      </div>
    </div>
    <div class="taskbar tb-right">
      <span class="tb-btn"><svg class="i16"><use href="#start"/></svg></span>
      <span class="tb-btn"><svg class="i16"><use href="#lens"/></svg></span>
      <span class="tb-btn"><svg class="i18"><use href="#cortana"/></svg></span>
      <span class="tb-btn"><svg class="i18"><use href="#taskview"/></svg></span>
      <span class="tb-app"><svg class="i24"><use href="#edge"/></svg></span>
      <span class="tb-app run cur"><svg class="i24"><use href="#chrome"/></svg></span>
      <span class="tb-app"><svg class="i20"><use href="#gear"/></svg></span>
      <span class="tb-app run"><svg class="i24"><use href="#explorer"/></svg></span>
      <span class="tb-app"><svg class="i24"><use href="#phone"/></svg></span>
      <span class="tb-app run"><svg class="i24"><use href="#pad"/></svg></span>
      <span class="tb-app run"><svg class="i24"><use href="#teams"/></svg></span>
      <span class="tb-app run"><svg class="i24"><use href="#gpdf"/></svg></span>
      <span class="tb-app run"><svg class="i24"><use href="#xampp"/></svg></span>
      <span class="tb-app run"><svg class="i24"><use href="#vstudio"/></svg></span>
      <span class="tb-app run"><svg class="i24"><use href="#player"/></svg></span>
      <span class="tb-app run"><svg class="i24"><use href="#vs"/></svg></span>
      <span class="tr-clock end">7:26 PM<br>6/26/2021</span>
    </div>
  </div>
</body>
</html>
```
FILE: styles.css
```css
body {
  margin: 0;
  width: 2732px;
  height: 768px;
  overflow: hidden;
  display: flex;
  flex-direction: column;
  font-family: Roboto, "Liberation Sans", sans-serif;
  font-size: 12px;
  background: #000;
}
.defs { width: 0; height: 0; position: absolute; }
svg { flex: none; display: block; }
.i12 { width: 12px; height: 12px; }
.i16 { width: 16px; height: 16px; }
.i18 { width: 18px; height: 18px; }
.i20 { width: 20px; height: 20px; }
.i24 { width: 24px; height: 24px; }
.i32 { width: 32px; height: 32px; }

.windows { display: flex; height: 728px; }

/* explorer */
.explorer {
  width: 1366px;
  display: flex;
  flex-direction: column;
  background: #202020;
  color: #e4e4e4;
}
.ex-title {
  height: 23px;
  background: #2b2b2b;
  display: flex;
  align-items: center;
  color: #777;
}
.ex-sep { width: 1px; height: 14px; background: #555; margin: 0 9px 0 5px; }
.ex-f2 { margin-left: 5px; }
.ex-drop { color: #ccc; font-size: 10px; margin-left: 7px; }
.ex-sep.sep2 { margin: 0 7px 0 6px; }
.ex-controls { margin-left: auto; display: flex; }
.ex-controls b { width: 46px; text-align: center; font-weight: 400; color: #777; font-family: "DejaVu Sans", sans-serif; font-size: 10px; }
.ex-tabs { height: 23px; background: #000; display: flex; align-items: center; }
.ex-tab { height: 23px; line-height: 22px; text-align: center; }
.ex-tab.file { width: 56px; background: #0063b1; color: #fff; }
.ex-tab.home { width: 58px; margin-left: 1px; background: #1f1f1f; color: #fff; }
.ex-tab.share { width: 58px; }
.ex-tab.view { width: 56px; }

.ribbon {
  height: 92px;
  box-sizing: border-box;
  background: #1f1f1f;
  border-bottom: 1px solid #2d2d2d;
  display: flex;
}
.group {
  display: flex;
  flex-direction: column;
  box-sizing: border-box;
  border-right: 1px solid #3a3a3a;
  margin: 3px 0 6px;
}
.g-clip { width: 262px; padding-left: 4px; }
.g-org { width: 192px; padding-left: 4px; }
.g-new { width: 145px; }
.g-open { width: 132px; padding-left: 2px; }
.g-sel { width: 116px; padding-left: 5px; }
.group-items { display: flex; height: 73px; }
.group-label { text-align: center; color: #aaa; margin-left: -4px; line-height: 16px; }
.big {
  display: flex;
  flex-direction: column;
  align-items: center;
  text-align: center;
  line-height: 14px;
  padding-top: 5px;
}
.big span { margin-top: 4px; }
.big svg { height: 32px; }
.w39 { width: 39px; }
.w42 { width: 42px; }
.w44 { width: 44px; }
.w45 { width: 45px; }
.w48 { width: 48px; }
.w58 { width: 58px; }
.w70 { width: 70px; }
.rib-sep { width: 1px; height: 55px; background: #444; margin: 8px 4px 0 4px; }
.small-col { display: flex; flex-direction: column; padding-top: 2px; }
.small { height: 22px; display: flex; align-items: center; gap: 3px; padding-left: 1px; white-space: nowrap; }
.small.tight { gap: 2px; }
.muted { color: #8c8c8c; }

.ex-address { height: 37px; display: flex; align-items: flex-start; padding-top: 6px; box-sizing: border-box; background: #191919; }
.ex-nav-btns { width: 107px; height: 29px; display: flex; align-items: center; box-sizing: border-box; padding-left: 11px; }
.ex-nav-btns svg:nth-child(2) { margin-left: 14px; }
.nav-chev { width: 10px; height: 7px; margin: 0 8px 0 10px; }
.addr-box {
  width: 1034px;
  height: 29px;
  box-sizing: border-box;
  border: 1px solid #4a4a4a;
  background: #191919;
  display: flex;
  align-items: center;
  padding-left: 2px;
  gap: 9px;
}
.crumb-sep { color: #888; }
.addr-end { margin-left: auto; display: flex; gap: 18px; padding-right: 10px; color: #bbb; }
.search-box {
  width: 184px;
  height: 29px;
  margin-left: 28px;
  box-sizing: border-box;
  border: 1px solid #4a4a4a;
  line-height: 27px;
  padding-left: 22px;
  color: #8c8c8c;
}

.ex-body { flex: 1; display: flex; min-height: 0; }
.nav-pane { width: 158px; background: #191919; display: flex; }
.nav-list { width: 140px; padding-top: 22px; overflow: hidden; height: 530px; box-sizing: border-box; }
.nav-item {
  width: 138px;
  height: 24px;
  display: flex;
  align-items: center;
  gap: 5px;
  padding-left: 32px;
  box-sizing: border-box;
  white-space: nowrap;
  overflow: hidden;
}
.nav-item.root { padding-left: 24px; }
.nav-item.gap { margin-top: 8px; }
.nav-item.gap7 { margin-top: 7px; }
.nav-item.selected { background: #333; }
.pinned { margin-left: auto; margin-right: 1px; }
.nav-scroll { width: 15px; display: flex; flex-direction: column; align-items: center; background: #1c1c1c; margin-right: 3px; }
.nav-arrow { width: 12px; height: 8px; margin: 11px 0 4px; }
.nav-arrow:last-child { margin: 13px 0 4px; }
.nav-thumb { flex: 1; width: 15px; background: #4d4d4d; }
.file-pane { flex: 1; padding-left: 17px; padding-top: 6px; }
.file-head {
  width: 600px;
  height: 25px;
  display: grid;
  grid-template-columns: 257px 143px 120px 80px;
  margin-bottom: 6px;
  color: #ccc;
  position: relative;
}
.file-head span { line-height: 24px; padding-left: 6px; border-right: 1px solid #4d4d4d; }
.file-head span:nth-of-type(1) { padding-left: 2px; }
.sort-caret { position: absolute; left: 121px; top: -2px; width: 10px; height: 6px; }
.file-row {
  width: 596px;
  height: 21px;
  display: grid;
  grid-template-columns: 257px 143px 120px 76px;
  align-items: center;
  color: #c9c9c9;
}
.file-row span { padding-left: 6px; white-space: nowrap; }
.file-row .fname { display: flex; align-items: center; gap: 2px; padding-left: 3px; color: #e6e6e6; }
.file-row .fsize { text-align: right; padding-right: 3px; }
.file-row.active { background: #333; }
.ex-status { height: 23px; display: flex; align-items: center; background: #333; color: #c8c8c8; padding-left: 14px; }
.st-item { padding-right: 10px; margin-right: 10px; border-right: 1px solid #ccc; line-height: 14px; }
.st-views { margin-left: auto; display: flex; margin-right: 4px; }
.st-view { width: 22px; height: 23px; display: flex; align-items: center; justify-content: center; box-sizing: border-box; }
.st-view.on { background: #666; border: 1px solid #888; }

/* chrome */
.chrome { width: 1366px; display: flex; flex-direction: column; background: #fff; }
.tabstrip { height: 34px; background: #ffdb5e; display: flex; align-items: center; padding-left: 9px; box-sizing: border-box; }
.favs { display: flex; width: 677.6px; flex: none; }
.favs.second { width: 390px; margin-left: -1.600px; }
.fav {
  width: 30.800px;
  height: 20px;
  flex: none;
  display: flex;
  align-items: center;
  justify-content: center;
  box-sizing: border-box;
  border-right: 1px solid #a8944a;
}
.second .fav { width: 30px; }
.w3 { color: #0d8a55; font: 700 15px "Liberation Serif", serif; line-height: 16px; }
.w3 sup { font-size: 7px; line-height: 0; }
.w3box { width: 16px; height: 16px; background: #8cc63f; color: #fff; font: 700 11px/16px "Liberation Sans", sans-serif; text-align: center; }
.tab-active { width: 31px; height: 34px; flex: none; background: #fff; border-radius: 8px 8px 0 0; text-align: center; line-height: 34px; color: #333; font-family: "DejaVu Sans", sans-serif; font-size: 11px; }
.tab-new { margin-left: 6px; width: 32px; flex: none; text-align: center; font: 400 24px "DejaVu Sans", sans-serif; color: #222; line-height: 30px; }
.tab-search { margin-left: 55px; flex: none; }
.win-btns { margin-left: auto; display: flex; }
.win-btns span { width: 46px; height: 32px; display: flex; align-items: center; justify-content: center; }
.toolbar { height: 32px; display: flex; align-items: flex-start; padding-top: 4px; box-sizing: border-box; }
.tool-btns { width: 140px; height: 28px; display: flex; align-items: center; gap: 14px; padding-left: 13px; box-sizing: border-box; }
.omnibox {
  width: 1022px;
  height: 28px;
  border-radius: 14px;
  background: #dedede;
  display: flex;
  align-items: center;
  padding-left: 10px;
  padding-right: 10px;
  box-sizing: border-box;
  flex: none;
}
.url { margin-left: 9px; font-size: 13.500px; color: #666; }
.url b { font-weight: 400; color: #222; }
.omni-zoom { margin-left: auto; }
.omni-star { margin-left: 16px; }
.ext-btns { flex: 1; height: 28px; display: flex; align-items: center; padding-left: 14px; gap: 14px; }
.avatar { width: 22px; height: 22px; border-radius: 50%; background: radial-gradient(circle at 50% 35%, #8a6a55 0 22%, #3d5a78 24% 60%, #333 62%); flex: none; }
.kebab { display: flex; flex-direction: column; gap: 2.500px; margin-left: 9px; }
.kebab i { width: 3.500px; height: 3.500px; border-radius: 50%; background: #333; }
.bookmarks { height: 37px; box-sizing: border-box; border-bottom: 1px solid #b5b5b5; display: flex; align-items: center; padding-left: 16px; color: #333; font-size: 12.500px; white-space: nowrap; }
.bm { display: flex; align-items: center; gap: 8px; flex: none; }
.bm-apps { gap: 10px; width: 65px; }
.bm-coding { width: 124px; gap: 8px; }
.bm-newf { width: 91px; }
.bm-re { width: 147px; }
.bm-gmail { width: 78px; }
.bm-yt { width: 86px; }
.bm-maps { width: 61px; }
.bm-ora { width: 114px; }
.bm-acad { width: 318px; }
.bm-more { width: 14px; font-size: 16px; color: #444; flex: none; }
.bm-sep { width: 1px; height: 22px; background: #bbb; margin: 0 9px; flex: none; }
.bm-other { width: 119px; }
.bm-read { padding-left: 2px; }

.page { flex: 1; display: flex; position: relative; min-height: 0; font-family: "Liberation Serif", serif; font-size: 20px; line-height: 23px; color: #000; }
.page a { color: #551a8b; }
.content { flex: 1; padding: 0 9px 0 10px; min-width: 0; }
.rule { border: 0; margin: 0; height: 2px; background: #9d9d9d; border-bottom: 1px solid #eee; box-sizing: border-box; }
.site-head { height: 169px; display: flex; justify-content: space-between; align-items: flex-start; }
.logo { display: flex; align-items: center; margin: 35px 0 0 27px; }
.logo-x { width: 100px; height: 85px; filter: blur(.4px); }
.logo-text { font: 400 45px/50px "DejaVu Sans", sans-serif; -webkit-text-stroke: 1.300px #111; color: #111; margin: -2px 0 0 -6px; filter: blur(.6px); letter-spacing: -.2px; }
.logged { margin: 20px 14px 0 0; }
.main { display: flex; margin-top: 23px; height: 238px; }
.side { width: 439px; padding: 14px 0 0 25px; }
.side-title { margin-bottom: 8px; }
.side .rule { width: 425px; }
.side-menu { margin: 22px 0 0; padding-left: 50px; }
.profile { border-left: 2px solid #000; flex: 1; }
.profile h3 { margin: 24px 0 0 60px; font-size: 23.400px; line-height: 26px; }
.avatar-pic { width: 132px; height: 135px; margin: 29px 0 0 36px; }
.sil { filter: blur(.5px); }
.upload { margin: 7px 0 0 491px; font: 16.670px "Liberation Sans", sans-serif; }
.upload button { font: inherit; height: 27px; padding: 0 8px; background: #efefef; border: 1.250px solid #767676; border-radius: 3px; color: #000; }
.file-line { display: flex; align-items: center; gap: 6px; }
.upload .submit { display: block; height: 28px; margin-top: 23px; }
.upload + .rule { margin-top: 22px; }
.copyright { text-align: center; margin-top: 32px; }
.page-scroll { width: 17px; background: #f1f1f1; display: flex; flex-direction: column; align-items: center; }
.ps-thumb { width: 13px; flex: 1; background: #bdbdbd; }
.ps-up, .ps-dn { height: 20px; width: 17px; position: relative; }
.ps-up::after { content: ""; position: absolute; left: 4px; top: 8px; border: 4px solid transparent; border-bottom: 5px solid #505050; border-top: 0; }
.ps-dn { height: 17px; }
.ps-dn::after { content: ""; position: absolute; left: 4px; top: 6px; border: 4px solid transparent; border-top: 5px solid #a3a3a3; border-bottom: 0; }
.status-bubble {
  position: absolute;
  left: 0;
  bottom: 0;
  height: 21px;
  width: 272px;
  box-sizing: border-box;
  padding-left: 5px;
  background: #ffdb5e;
  border-top: 1px solid #e4e4e4;
  border-right: 1px solid #e4e4e4;
  border-top-right-radius: 3px;
  font: 11.800px/20px Roboto, sans-serif;
  color: #444;
  white-space: nowrap;
}

/* taskbars */
.taskbars { display: flex; height: 40px; color: #e6e6e6; }
.taskbar { width: 1366px; display: flex; align-items: center; height: 40px; }
.tb-left { background: linear-gradient(90deg, #3a3533, #38342f 60%, #35352e 90%, #3a3d40); }
.tb-right { background: linear-gradient(90deg, #3b3734, #3a3633 60%, #3a3d3d 65%, #34342a 78%, #3f3835); }
.tb-btn { width: 48px; height: 40px; flex: none; display: flex; align-items: center; justify-content: center; }
.tb-search { width: 344px; height: 40px; flex: none; box-sizing: border-box; background: #363636; border: 1px solid #6a6a6a; display: flex; align-items: center; padding-left: 12px; gap: 12px; font-size: 14px; color: #c8c8c8; }
.tb-app { width: 40px; height: 40px; flex: none; display: flex; align-items: center; justify-content: center; box-sizing: border-box; }
.tb-btn + .tb-app { margin-left: 2px; }
.tb-app.run { border-bottom: 2px solid #76b9ed; padding-top: 2px; }
.tb-app.cur { background: #5c5c5c; }
.tb-right .tb-btn { width: 48.400px; }
.tb-right .tb-app { width: 49px; }
.tray { margin-left: auto; display: flex; align-items: center; height: 40px; border-right: 1px solid #777; margin-right: 4px; }
.tr-weather { width: 40px; display: flex; justify-content: center; }
.tr-temp { width: 41px; padding-right: 5px; box-sizing: border-box; font-size: 13px; color: #ccc; }
.tr-ic { width: 24px; display: flex; justify-content: center; }
.tr-lang { width: 38px; text-align: center; font-size: 12.500px; color: #ccc; }
.tr-clock { text-align: center; line-height: 18px; white-space: nowrap; width: 62px; flex: none; }
.tr-clock.end { margin-left: auto; margin-right: 2px; }
.tr-notif { width: 44px; display: flex; justify-content: center; position: relative; }
.tr-notif b { position: absolute; left: 25px; top: 12px; font-size: 9px; font-weight: 400; }
```
